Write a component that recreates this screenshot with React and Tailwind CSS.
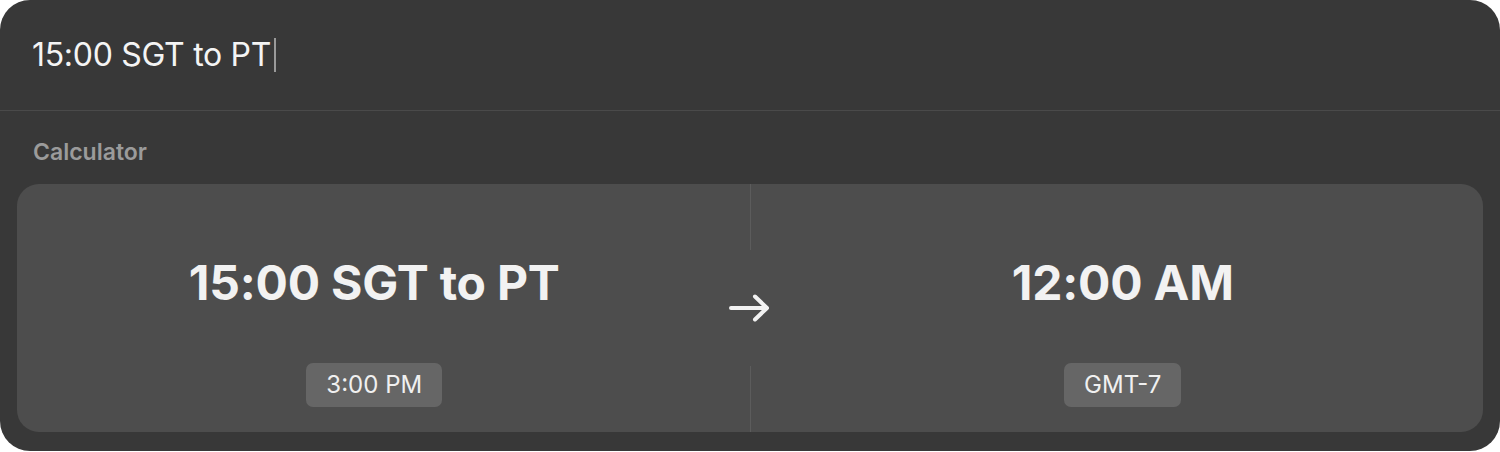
import React from "react";

function Side({ title, badge, className }) {
  return (
    <div className={"min-w-0 flex flex-col items-center " + className}>
      <div className="mt-[75px] text-[48px] font-bold leading-none text-[#f2f2f2] tracking-[-0.2px]">{title}</div>
      <div className="mt-[56px] px-[20px] h-[44px] flex items-center rounded-[7px] bg-[#666666] text-[24px] text-[#f0f0f0]">
        {badge}
      </div>
    </div>
  );
}

export default function App() {
  return (
    <div className="w-[1500px] h-[452px] bg-white" style={{ fontFamily: "Inter, 'Liberation Sans', sans-serif" }}>
      <div className="w-[1500px] h-[451px] rounded-[30px] bg-[#383838] flex flex-col overflow-hidden">
        <div className="h-[111px] shrink-0 flex items-center pl-[32px] border-b border-[#4a4a4a]">
          <span className="text-[32px] text-[#f4f4f4] leading-none tracking-[-0.3px]">15:00 SGT to PT</span>
          <span className="ml-[3px] w-[2px] h-[34px] bg-[#9a9a9a]" />
        </div>
        <div className="pl-[33px] pt-[30px] h-[73px] shrink-0 text-[23px] font-semibold text-[#9b9b9b] leading-none">Calculator</div>
        <div className="mx-[17px] h-[248px] rounded-[22px] bg-[#4d4d4d] grid grid-cols-[1fr_1px_1fr]">
          <Side title="15:00 SGT to PT" badge="3:00 PM" className="pr-[18px]" />
          <div className="w-px flex flex-col items-center">
            <div className="w-px h-[66px] bg-[#5c5c5c]" />
            <div className="flex-1 flex items-center justify-center">
              <svg width="44" height="30" viewBox="0 0 44 30" fill="none" stroke="#f2f2f2" strokeWidth="4" strokeLinecap="round" strokeLinejoin="round" className="shrink-0">
                <path d="M3 15 H39 M27 3.5 L39 15 L27 26.5" />
              </svg>
            </div>
            <div className="w-px h-[66px] bg-[#5c5c5c]" />
          </div>
          <Side title="12:00 AM" badge="GMT-7" className="pl-[12px]" />
        </div>
      </div>
    </div>
  );
}
